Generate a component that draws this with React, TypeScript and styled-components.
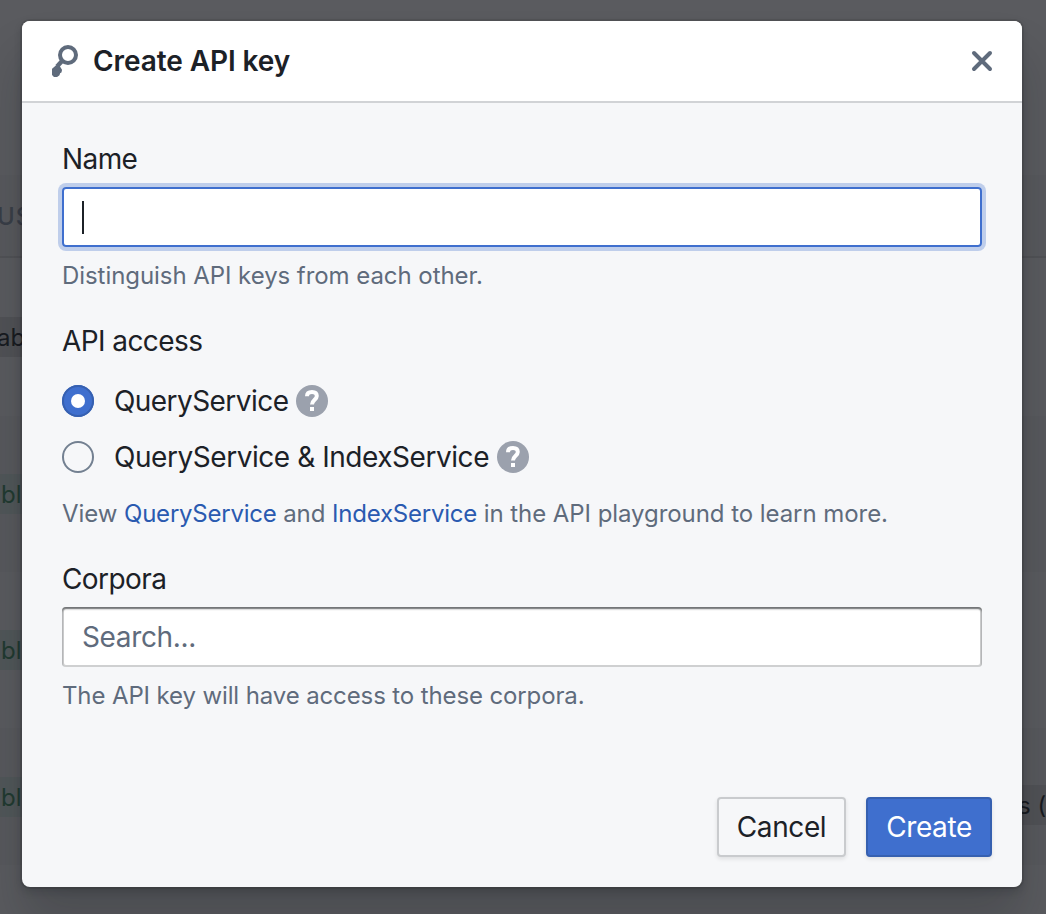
import React from "react";
import styled, { createGlobalStyle } from "styled-components";

const Global = createGlobalStyle`
  *, *::before, *::after { box-sizing: border-box; }
  body {
    margin: 0;
    overflow: hidden;
    font-family: Inter, "Liberation Sans", sans-serif;
    font-size: 28px;
    line-height: 36px;
    color: #1c2127;
    -webkit-font-smoothing: antialiased;
  }
`;

const Page = styled.div`
  position: relative;
  width: 1046px;
  height: 914px;
  overflow: hidden;
  background: #5a5b5f;
`;

const Table = styled.div`
  display: flex;
  flex-direction: column;
  padding-top: 175px;
`;

const Row = styled.div<{ $h: number; $shade?: boolean; $line?: boolean }>`
  display: flex;
  align-items: center;
  justify-content: space-between;
  height: ${(p) => p.$h}px;
  background: ${(p) => (p.$shade ? "#58595d" : "transparent")};
  border-bottom: ${(p) => (p.$line ? "2px solid #515256" : "none")};
`;

const HeadCell = styled.span`
  margin-left: -3px;
  padding-top: 2px;
  font-size: 24px;
  font-weight: 500;
  letter-spacing: 1px;
  color: #393e47;
`;

const Tag = styled.span<{ $green?: boolean; $right?: boolean }>`
  height: 40px;
  width: 60px;
  padding-left: ${(p) => (p.$green ? 1 : 0)}px;
  font-size: 24px;
  line-height: 42px;
  white-space: nowrap;
  color: ${(p) => (p.$green ? "#213a30" : "#181b20")};
  background: ${(p) => (p.$green ? "#515759" : "#515256")};
  text-indent: ${(p) => (p.$green ? 0 : -3)}px;
  ${(p) => p.$right && "width: 28px; margin-top: 17px; text-indent: 0;"}
`;

const Dialog = styled.section`
  position: absolute;
  left: 22px;
  top: 21px;
  width: 1000px;
  height: 866px;
  display: flex;
  flex-direction: column;
  border-radius: 8px;
  background: #f6f7f9;
  box-shadow: 0 0 0 2px rgba(17, 20, 24, 0.1), 0 4px 8px rgba(17, 20, 24, 0.2), 0 36px 48px rgba(17, 20, 24, 0.2);
`;

const Header = styled.header`
  display: flex;
  align-items: center;
  height: 82px;
  padding: 0 24px 0 28px;
  border-radius: 8px 8px 0 0;
  background: #fff;
  border-bottom: 2px solid #d1d3d6;
`;

const Title = styled.h1`
  flex: 1;
  margin: 0 0 0 11px;
  font-size: 28px;
  font-weight: 600;
  line-height: 36px;
  letter-spacing: -0.08px;
`;

const Close = styled.button`
  display: flex;
  padding: 0;
  border: 0;
  background: none;
`;

const Body = styled.div`
  display: flex;
  flex-direction: column;
  flex: 1;
  padding: 38px 40px 0;
`;

const Label = styled.div`
  height: 36px;
  letter-spacing: -0.58px;
`;

const InputBox = styled.div<{ $focus?: boolean }>`
  display: flex;
  align-items: center;
  height: 60px;
  margin-top: 10px;
  padding: 0 20px;
  border-radius: 4px;
  background: #fff;
  color: #5f6b7c;
  letter-spacing: -0.35px;
  box-shadow: ${(p) =>
    p.$focus
      ? "inset 0 0 0 2px #3f6fce, 0 0 0 4px #bfceeb"
      : "inset 0 0 0 2px rgba(17,20,24,0.2), inset 0 2px 2px rgba(17,20,24,0.5)"};
`;

const Caret = styled.span`
  width: 2px;
  height: 33px;
  background: #1c2127;
`;

const Hint = styled.p<{ $top?: number; $track?: number }>`
  margin: ${(p) => p.$top ?? 13}px 0 0;
  font-size: 24px;
  line-height: 32px;
  letter-spacing: ${(p) => p.$track ?? -0.12}px;
  color: #5f6b7c;
  white-space: nowrap;
`;

const Link = styled.a`
  letter-spacing: -0.23px;
  color: #2a5ab0;
`;

const Field = styled.div<{ $top?: number }>`
  margin-top: ${(p) => p.$top ?? 0}px;
`;

const Option = styled.label<{ $top: number; $track: number }>`
  display: flex;
  align-items: center;
  height: 36px;
  margin-top: ${(p) => p.$top}px;
  letter-spacing: ${(p) => p.$track}px;
`;

const Radio = styled.span<{ $on?: boolean }>`
  display: flex;
  align-items: center;
  justify-content: center;
  width: 32px;
  height: 32px;
  margin-right: 20px;
  border-radius: 50%;
  background: ${(p) => (p.$on ? "#3f6fce" : "transparent")};
  box-shadow: inset 0 0 0 2px ${(p) => (p.$on ? "#3660b0" : "#738091")};
  &::after {
    content: "";
    width: 14px;
    height: 14px;
    border-radius: 50%;
    background: ${(p) => (p.$on ? "#fff" : "transparent")};
  }
`;

const HelpSvg = styled.svg`
  margin-left: 8px;
`;

const Footer = styled.footer`
  display: flex;
  justify-content: flex-end;
  gap: 20px;
  padding: 0 30px 30px;
`;

const Button = styled.button<{ $primary?: boolean }>`
  width: ${(p) => (p.$primary ? 126 : 129)}px;
  height: 60px;
  padding: 0;
  border: 2px solid ${(p) => (p.$primary ? "#3660b0" : "#c9cbce")};
  border-radius: 4px;
  font: inherit;
  letter-spacing: -0.4px;
  color: ${(p) => (p.$primary ? "#fff" : "#1c2127")};
  background: ${(p) => (p.$primary ? "#3f6fce" : "#f6f7f9")};
  box-shadow: 0 2px 4px rgba(17, 20, 24, 0.1);
`;

const KeyIcon = () => (
  <svg width="32" height="36" viewBox="0 0 32 36" fill="none" stroke="#5f6b7c">
    <circle cx="18" cy="12" r="8" strokeWidth="4" />
    <path d="M12.5 17.5 7 23.5" strokeWidth="4.4" />
    <path
      d="M3 26.3 6.2 23.6 9 23.8 11 27 10.6 28.8 9.4 29.4 8.6 31.6 6.8 33H4.4L3 31.6Z"
      fill="#5f6b7c"
      strokeWidth="2"
      strokeLinejoin="round"
    />
  </svg>
);

const CrossIcon = () => (
  <svg width="32" height="32" viewBox="0 0 32 32" stroke="#5f6b7c" strokeWidth="4" strokeLinecap="round">
    <path d="M8 8 24 24M24 8 8 24" />
  </svg>
);

const HelpIcon = () => (
  <HelpSvg width="32" height="32" viewBox="0 0 32 32">
    <circle cx="16" cy="16" r="16" fill="#9ba1ad" />
    <path d="M11 11.2C11 8.2 13 7 16 7c3 0 4.8 1.4 4.8 4 0 3.8-4.8 3.8-4.8 8.6" fill="none" stroke="#fff" strokeWidth="4" />
    <path d="M14 22h4v4h-4z" fill="#fff" />
  </HelpSvg>
);

export default function App() {
  return (
    <Page>
      <Global />
      <Table>
        <Row $h={83} $shade $line>
          <HeadCell>US</HeadCell>
        </Row>
        <Row $h={158}>
          <Tag>ab</Tag>
        </Row>
        <Row $h={156} $shade>
          <Tag $green>bl</Tag>
        </Row>
        <Row $h={156}>
          <Tag $green>bl</Tag>
        </Row>
        <Row $h={137} $shade>
          <Tag $green>bl</Tag>
          <Tag $right>s (</Tag>
        </Row>
      </Table>
      <Dialog>
        <Header>
          <KeyIcon />
          <Title>Create API key</Title>
          <Close aria-label="Close">
            <CrossIcon />
          </Close>
        </Header>
        <Body>
          <Field>
            <Label>Name</Label>
            <InputBox $focus>
              <Caret />
            </InputBox>
            <Hint $track={-0.06}>Distinguish API keys from each other.</Hint>
          </Field>
          <Field $top={31}>
            <Label>API access</Label>
            <Option $top={24} $track={-0.56}>
              <Radio $on />
              QueryService
              <HelpIcon />
            </Option>
            <Option $top={20} $track={-0.45}>
              <Radio />
              QueryService &amp; IndexService
              <HelpIcon />
            </Option>
            <Hint $top={23} $track={-0.06}>
              View <Link>QueryService</Link> and <Link>IndexService</Link> in the API playground to learn more.
            </Hint>
          </Field>
          <Field $top={31}>
            <Label>Corpora</Label>
            <InputBox>Search...</InputBox>
            <Hint>The API key will have access to these corpora.</Hint>
          </Field>
        </Body>
        <Footer>
          <Button>Cancel</Button>
          <Button $primary>Create</Button>
        </Footer>
      </Dialog>
    </Page>
  );
}
